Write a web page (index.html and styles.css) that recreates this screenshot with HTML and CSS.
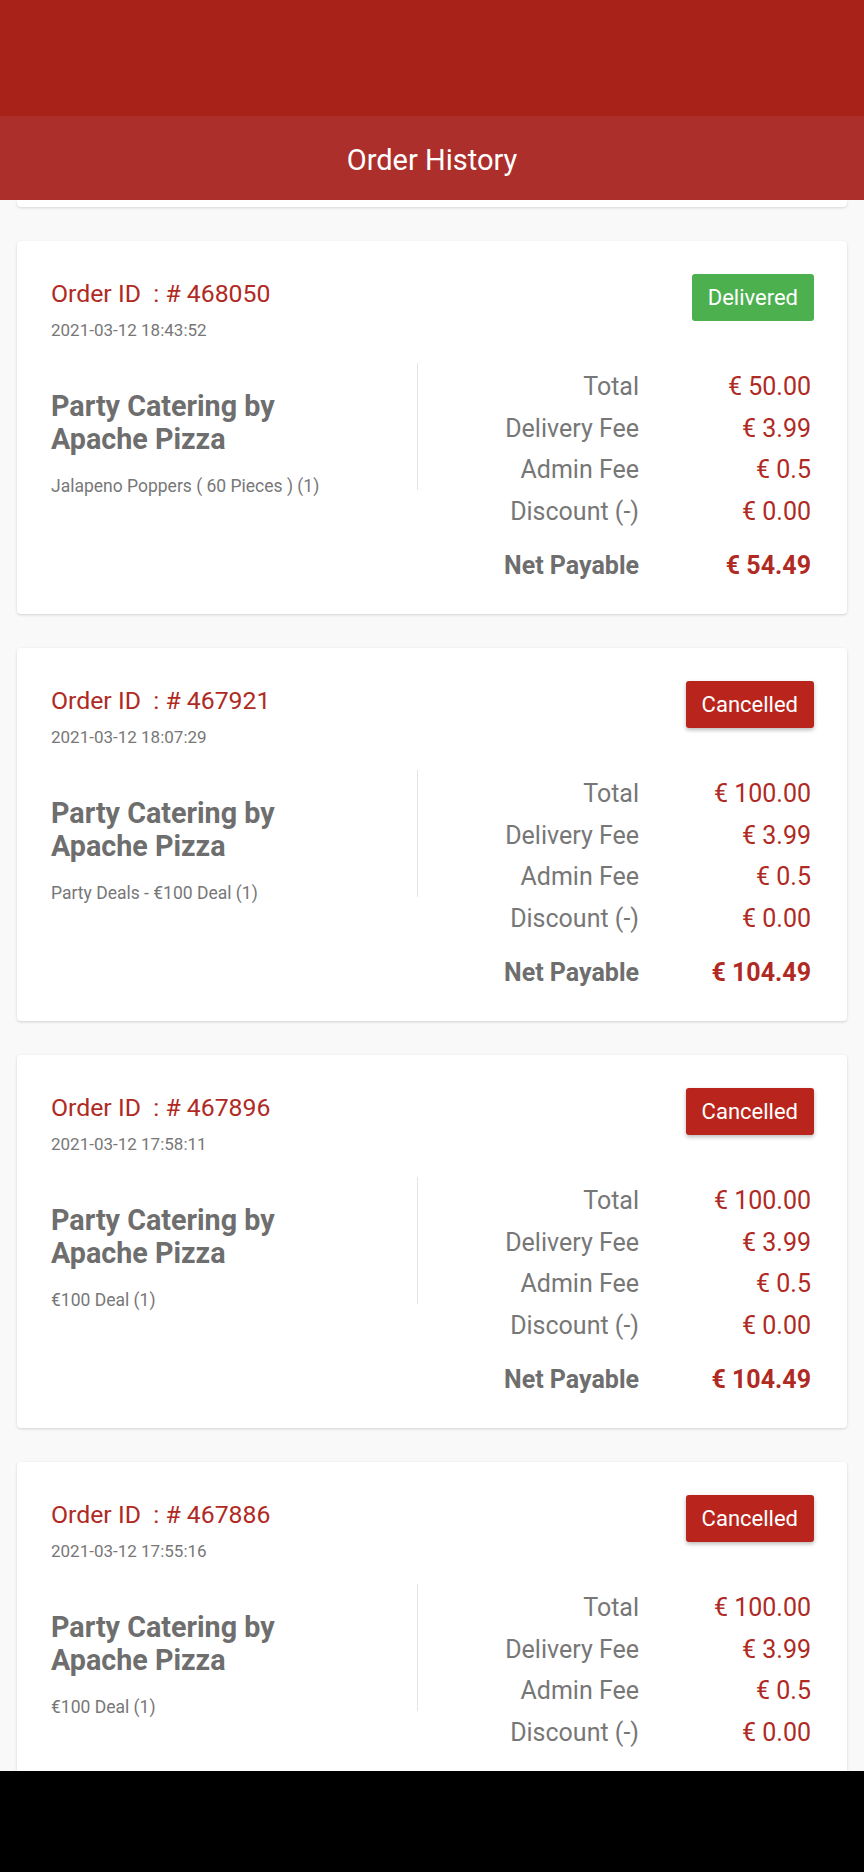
FILE: index.html
```html
<!DOCTYPE html>
<html lang="en">
<head>
<meta charset="utf-8">
<title>Order History</title>
<link rel="stylesheet" href="styles.css">
</head>
<body>
<div class="screen">
  <div class="statusbar"></div>
  <header class="appbar"><h1 class="title">Order History</h1></header>
  <main class="list">
    <div class="card-tail"></div>

    <article class="card">
      <div class="card-top">
        <div class="meta">
          <div class="order-id">Order ID&nbsp; : # 468050</div>
          <div class="date">2021-03-12 18:43:52</div>
        </div>
        <span class="badge badge-delivered">Delivered</span>
      </div>
      <div class="card-body">
        <div class="info">
          <div class="shop">Party Catering by Apache Pizza</div>
          <div class="items">Jalapeno Poppers ( 60 Pieces ) (1)</div>
        </div>
        <div class="divider"></div>
        <div class="prices">
          <div class="row"><span class="label">Total</span><span class="value">€ 50.00</span></div>
          <div class="row"><span class="label">Delivery Fee</span><span class="value">€ 3.99</span></div>
          <div class="row"><span class="label">Admin Fee</span><span class="value">€ 0.5</span></div>
          <div class="row"><span class="label">Discount (-)</span><span class="value">€ 0.00</span></div>
          <div class="row row-net"><span class="label">Net Payable</span><span class="value">€ 54.49</span></div>
        </div>
      </div>
    </article>

    <article class="card">
      <div class="card-top">
        <div class="meta">
          <div class="order-id">Order ID&nbsp; : # 467921</div>
          <div class="date">2021-03-12 18:07:29</div>
        </div>
        <span class="badge badge-cancelled">Cancelled</span>
      </div>
      <div class="card-body">
        <div class="info">
          <div class="shop">Party Catering by Apache Pizza</div>
          <div class="items">Party Deals - €100 Deal (1)</div>
        </div>
        <div class="divider"></div>
        <div class="prices">
          <div class="row"><span class="label">Total</span><span class="value">€ 100.00</span></div>
          <div class="row"><span class="label">Delivery Fee</span><span class="value">€ 3.99</span></div>
          <div class="row"><span class="label">Admin Fee</span><span class="value">€ 0.5</span></div>
          <div class="row"><span class="label">Discount (-)</span><span class="value">€ 0.00</span></div>
          <div class="row row-net"><span class="label">Net Payable</span><span class="value">€ 104.49</span></div>
        </div>
      </div>
    </article>

    <article class="card">
      <div class="card-top">
        <div class="meta">
          <div class="order-id">Order ID&nbsp; : # 467896</div>
          <div class="date">2021-03-12 17:58:11</div>
        </div>
        <span class="badge badge-cancelled">Cancelled</span>
      </div>
      <div class="card-body">
        <div class="info">
          <div class="shop">Party Catering by Apache Pizza</div>
          <div class="items">€100 Deal (1)</div>
        </div>
        <div class="divider"></div>
        <div class="prices">
          <div class="row"><span class="label">Total</span><span class="value">€ 100.00</span></div>
          <div class="row"><span class="label">Delivery Fee</span><span class="value">€ 3.99</span></div>
          <div class="row"><span class="label">Admin Fee</span><span class="value">€ 0.5</span></div>
          <div class="row"><span class="label">Discount (-)</span><span class="value">€ 0.00</span></div>
          <div class="row row-net"><span class="label">Net Payable</span><span class="value">€ 104.49</span></div>
        </div>
      </div>
    </article>

    <article class="card">
      <div class="card-top">
        <div class="meta">
          <div class="order-id">Order ID&nbsp; : # 467886</div>
          <div class="date">2021-03-12 17:55:16</div>
        </div>
        <span class="badge badge-cancelled">Cancelled</span>
      </div>
      <div class="card-body">
        <div class="info">
          <div class="shop">Party Catering by Apache Pizza</div>
          <div class="items">€100 Deal (1)</div>
        </div>
        <div class="divider"></div>
        <div class="prices">
          <div class="row"><span class="label">Total</span><span class="value">€ 100.00</span></div>
          <div class="row"><span class="label">Delivery Fee</span><span class="value">€ 3.99</span></div>
          <div class="row"><span class="label">Admin Fee</span><span class="value">€ 0.5</span></div>
          <div class="row"><span class="label">Discount (-)</span><span class="value">€ 0.00</span></div>
          <div class="row row-net"><span class="label">Net Payable</span><span class="value">€ 104.49</span></div>
        </div>
      </div>
    </article>
  </main>
  <div class="navbar"></div>
</div>
</body>
</html>
```

FILE: styles.css
```css
* { box-sizing: border-box; }

html, body {
  margin: 0;
  padding: 0;
}

body {
  font-family: Roboto, "Noto Sans", "Liberation Sans", sans-serif;
  background: #f9f9f9;
}

.screen {
  width: 864px;
  height: 1872px;
  display: flex;
  flex-direction: column;
  overflow: hidden;
  background: #f9f9f9;
}

.statusbar {
  height: 116px;
  flex: none;
  background: #a8221a;
}

.appbar {
  height: 84px;
  flex: none;
  background: #ad2f2b;
  padding-top: 4px;
  position: relative;
  z-index: 2;
}

.title {
  margin: 0;
  font-size: 29px;
  font-weight: 400;
  line-height: 80px;
  color: #ffffff;
  text-align: center;
}

.list {
  flex: 1;
  overflow: hidden;
  padding: 0 17px;
}

.card-tail {
  height: 7px;
  background: #ffffff;
  border-radius: 0 0 4px 4px;
  box-shadow: 0 1px 3px rgba(0, 0, 0, 0.14);
  margin-bottom: 34px;
}

.card {
  height: 373px;
  background: #ffffff;
  border-radius: 4px;
  box-shadow: 0 1px 3px rgba(0, 0, 0, 0.16);
  padding: 33px 33px 0 34px;
  margin-bottom: 34px;
}

.card-top {
  display: flex;
  justify-content: space-between;
  align-items: flex-start;
}

.order-id {
  font-size: 24.8px;
  line-height: 38px;
  padding-top: 1px;
  color: #b02a24;
}

.date {
  margin-top: 7px;
  font-size: 17px;
  line-height: 20px;
  color: #777777;
}

.badge {
  display: block;
  height: 47px;
  padding: 0 16px;
  font-size: 22px;
  line-height: 47px;
  color: #ffffff;
  border-radius: 3px;
}

.badge-delivered {
  background: #4cb04f;
}

.badge-cancelled {
  background: #b9251c;
  box-shadow: 0 2px 4px rgba(0, 0, 0, 0.28);
}

.card-body {
  display: flex;
  align-items: flex-start;
  margin-top: 23px;
}

.info {
  width: 366px;
  flex: none;
  padding-top: 27px;
}

.shop {
  max-width: 290px;
  font-size: 28.7px;
  line-height: 32.5px;
  font-weight: 700;
  color: #6e6e6e;
}

.items {
  margin-top: 21px;
  font-size: 17.5px;
  line-height: 20px;
  color: #777777;
}

.divider {
  width: 1px;
  height: 127px;
  flex: none;
  background: #e4e4e4;
}

.prices {
  flex: 1;
  padding-top: 3px;
  padding-right: 3px;
}

.row {
  display: flex;
  font-size: 25px;
  line-height: 41.5px;
}

.label {
  flex: 1;
  text-align: right;
  color: #777777;
}

.value {
  width: 172px;
  text-align: right;
  color: #b02a24;
}

.row-net {
  margin-top: 13px;
  font-weight: 700;
}

.row-net .label {
  color: #6e6e6e;
}

.navbar {
  height: 101px;
  flex: none;
  background: #000000;
}
```
